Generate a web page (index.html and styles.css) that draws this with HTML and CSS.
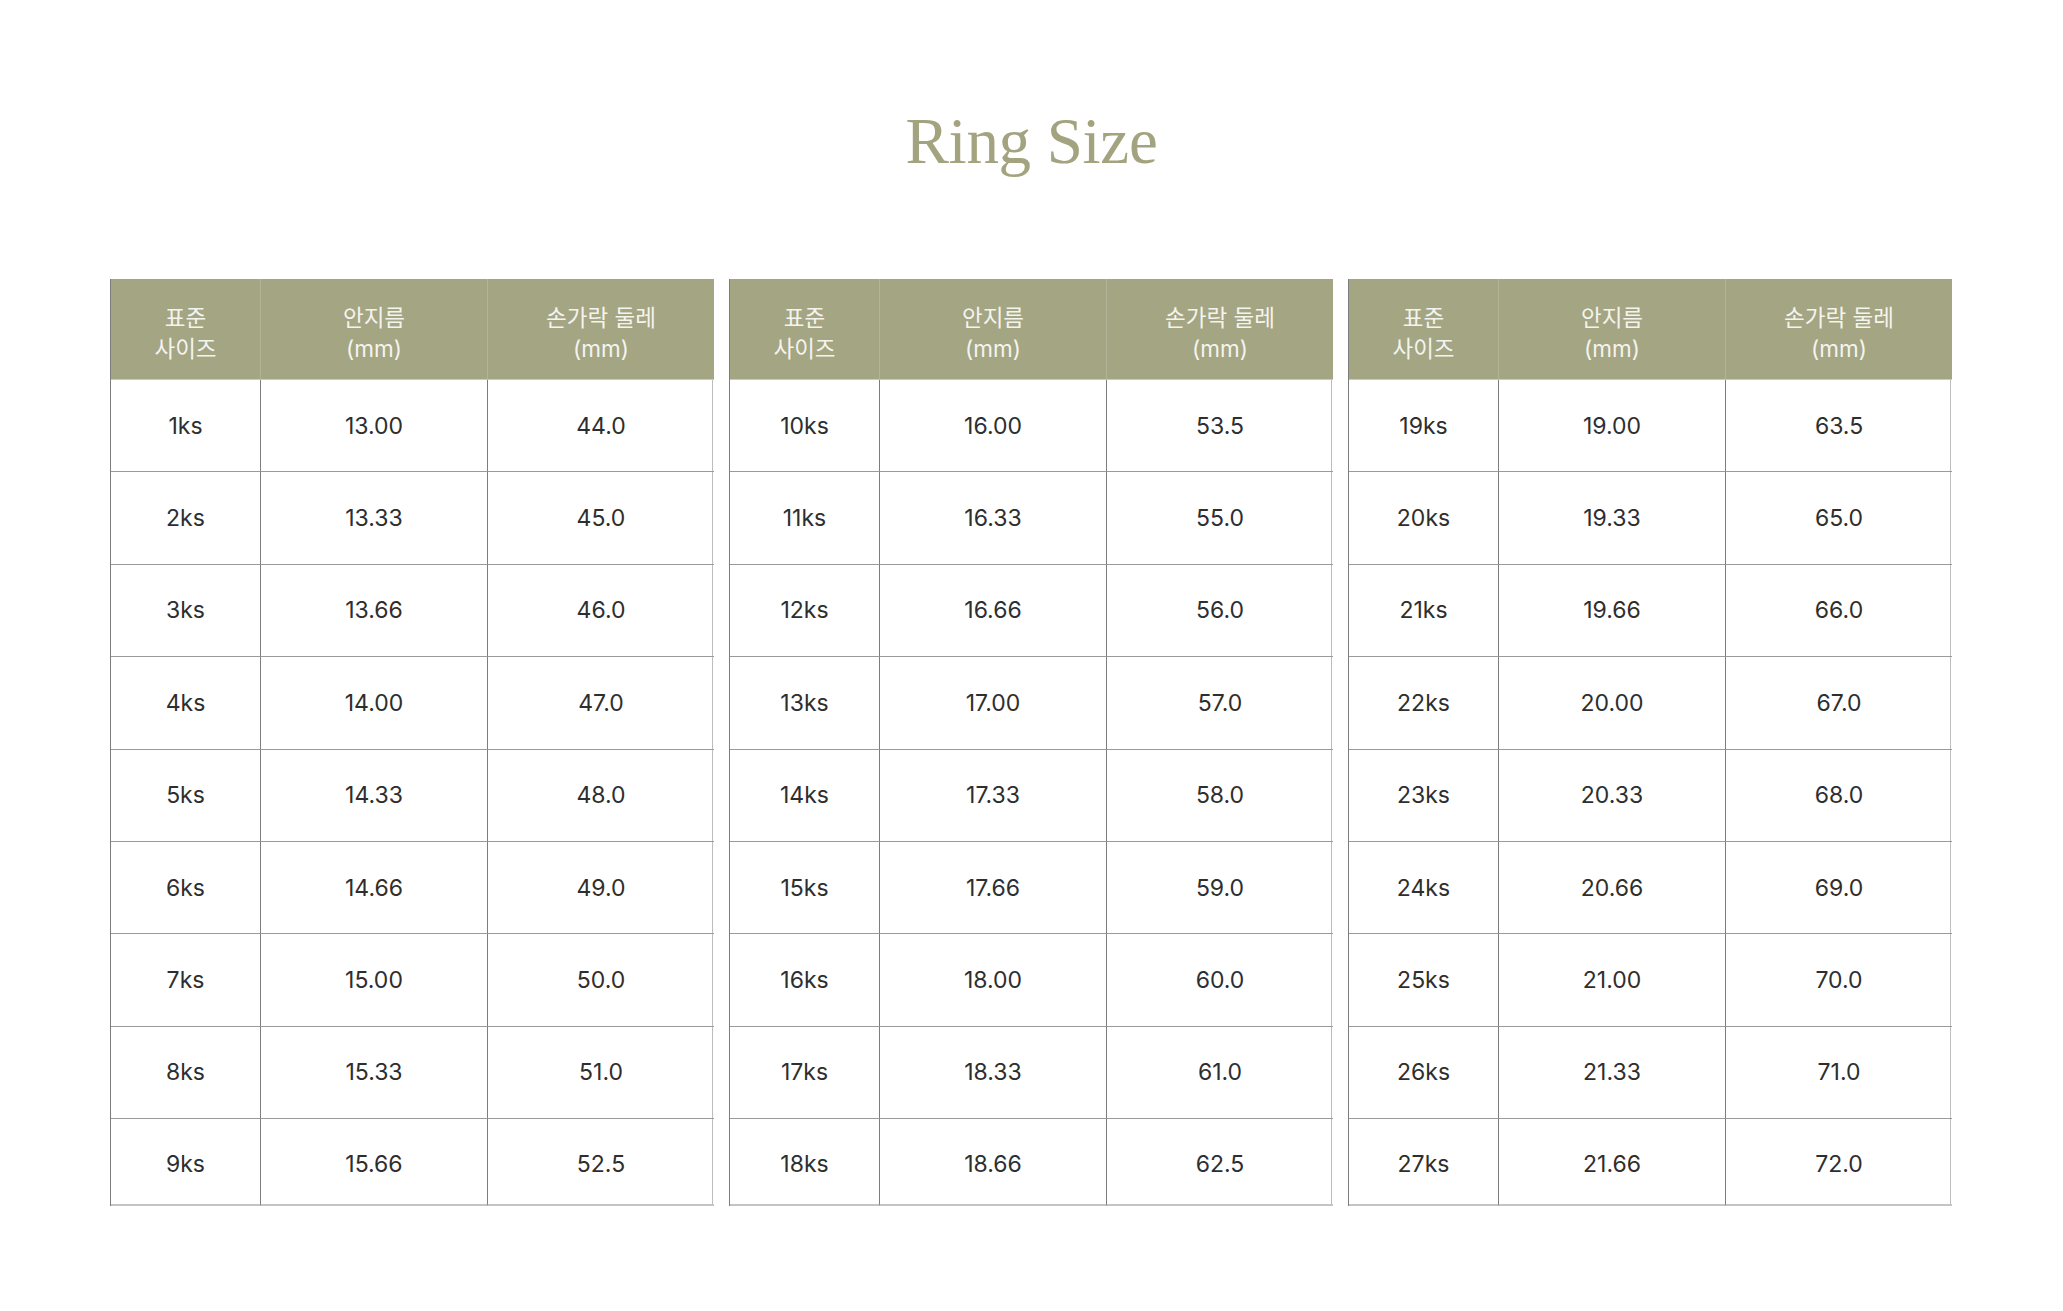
FILE: index.html
```html
<!DOCTYPE html>
<html lang="ko">
<head>
<meta charset="utf-8">
<title>Ring Size</title>
<link rel="stylesheet" href="styles.css">
</head>
<body>
<main class="page">
  <h1 class="title">Ring Size</h1>
  <div class="tables">
    <div class="size-table">
      <div class="cell head">표준<br>사이즈</div>
      <div class="cell head">안지름<br>(mm)</div>
      <div class="cell head">손가락 둘레<br>(mm)</div>
      <div class="cell">1ks</div><div class="cell">13.00</div><div class="cell">44.0</div>
      <div class="cell">2ks</div><div class="cell">13.33</div><div class="cell">45.0</div>
      <div class="cell">3ks</div><div class="cell">13.66</div><div class="cell">46.0</div>
      <div class="cell">4ks</div><div class="cell">14.00</div><div class="cell">47.0</div>
      <div class="cell">5ks</div><div class="cell">14.33</div><div class="cell">48.0</div>
      <div class="cell">6ks</div><div class="cell">14.66</div><div class="cell">49.0</div>
      <div class="cell">7ks</div><div class="cell">15.00</div><div class="cell">50.0</div>
      <div class="cell">8ks</div><div class="cell">15.33</div><div class="cell">51.0</div>
      <div class="cell last">9ks</div><div class="cell last">15.66</div><div class="cell last">52.5</div>
    </div>
    <div class="size-table">
      <div class="cell head">표준<br>사이즈</div>
      <div class="cell head">안지름<br>(mm)</div>
      <div class="cell head">손가락 둘레<br>(mm)</div>
      <div class="cell">10ks</div><div class="cell">16.00</div><div class="cell">53.5</div>
      <div class="cell">11ks</div><div class="cell">16.33</div><div class="cell">55.0</div>
      <div class="cell">12ks</div><div class="cell">16.66</div><div class="cell">56.0</div>
      <div class="cell">13ks</div><div class="cell">17.00</div><div class="cell">57.0</div>
      <div class="cell">14ks</div><div class="cell">17.33</div><div class="cell">58.0</div>
      <div class="cell">15ks</div><div class="cell">17.66</div><div class="cell">59.0</div>
      <div class="cell">16ks</div><div class="cell">18.00</div><div class="cell">60.0</div>
      <div class="cell">17ks</div><div class="cell">18.33</div><div class="cell">61.0</div>
      <div class="cell last">18ks</div><div class="cell last">18.66</div><div class="cell last">62.5</div>
    </div>
    <div class="size-table">
      <div class="cell head">표준<br>사이즈</div>
      <div class="cell head">안지름<br>(mm)</div>
      <div class="cell head">손가락 둘레<br>(mm)</div>
      <div class="cell">19ks</div><div class="cell">19.00</div><div class="cell">63.5</div>
      <div class="cell">20ks</div><div class="cell">19.33</div><div class="cell">65.0</div>
      <div class="cell">21ks</div><div class="cell">19.66</div><div class="cell">66.0</div>
      <div class="cell">22ks</div><div class="cell">20.00</div><div class="cell">67.0</div>
      <div class="cell">23ks</div><div class="cell">20.33</div><div class="cell">68.0</div>
      <div class="cell">24ks</div><div class="cell">20.66</div><div class="cell">69.0</div>
      <div class="cell">25ks</div><div class="cell">21.00</div><div class="cell">70.0</div>
      <div class="cell">26ks</div><div class="cell">21.33</div><div class="cell">71.0</div>
      <div class="cell last">27ks</div><div class="cell last">21.66</div><div class="cell last">72.0</div>
    </div>
  </div>
</main>
</body>
</html>
```

FILE: styles.css
```css
html, body {
  margin: 0;
  padding: 0;
  background: #ffffff;
}

.page {
  padding: 101px 110px 0;
  font-family: Inter, "Noto Sans CJK KR", sans-serif;
}

.title {
  margin: 0;
  height: 80px;
  line-height: 80px;
  text-align: center;
  font-family: "Liberation Serif", "DejaVu Serif", serif;
  font-weight: 400;
  font-size: 65px;
  color: #a3a47f;
  letter-spacing: -0.3px;
}

.tables {
  margin-top: 98px;
  display: flex;
  gap: 16px;
}

.size-table {
  width: 603px;
  display: grid;
  grid-template-columns: 150px 227px 226px;
  grid-template-rows: 101px repeat(8, 92.4px) 87px;
  border-left: 1px solid #7d7d7d;
  border-right: 1px solid #bdbdbd;
  box-sizing: border-box;
}

.cell {
  display: flex;
  align-items: center;
  justify-content: center;
  text-align: center;
  font-size: 23px;
  font-weight: 400;
  color: #2e2e2e;
  border-bottom: 1px solid #9a9a9a;
  border-right: 1px solid #7d7d7d;
  box-sizing: border-box;
}

.cell:nth-child(3n) {
  border-right: none;
}

.cell.head {
  background: #a4a583;
  color: #f4f4ee;
  font-size: 22.5px;
  line-height: 31px;
  padding-top: 8px;
  border-right: 1px solid #b3b497;
  border-bottom: 1px solid #c8c8c8;
}

.cell.head:nth-child(3n) {
  border-right: none;
}

.cell.last {
  padding-top: 5px;
  border-bottom: 2px solid #c4c4c4;
}
```
